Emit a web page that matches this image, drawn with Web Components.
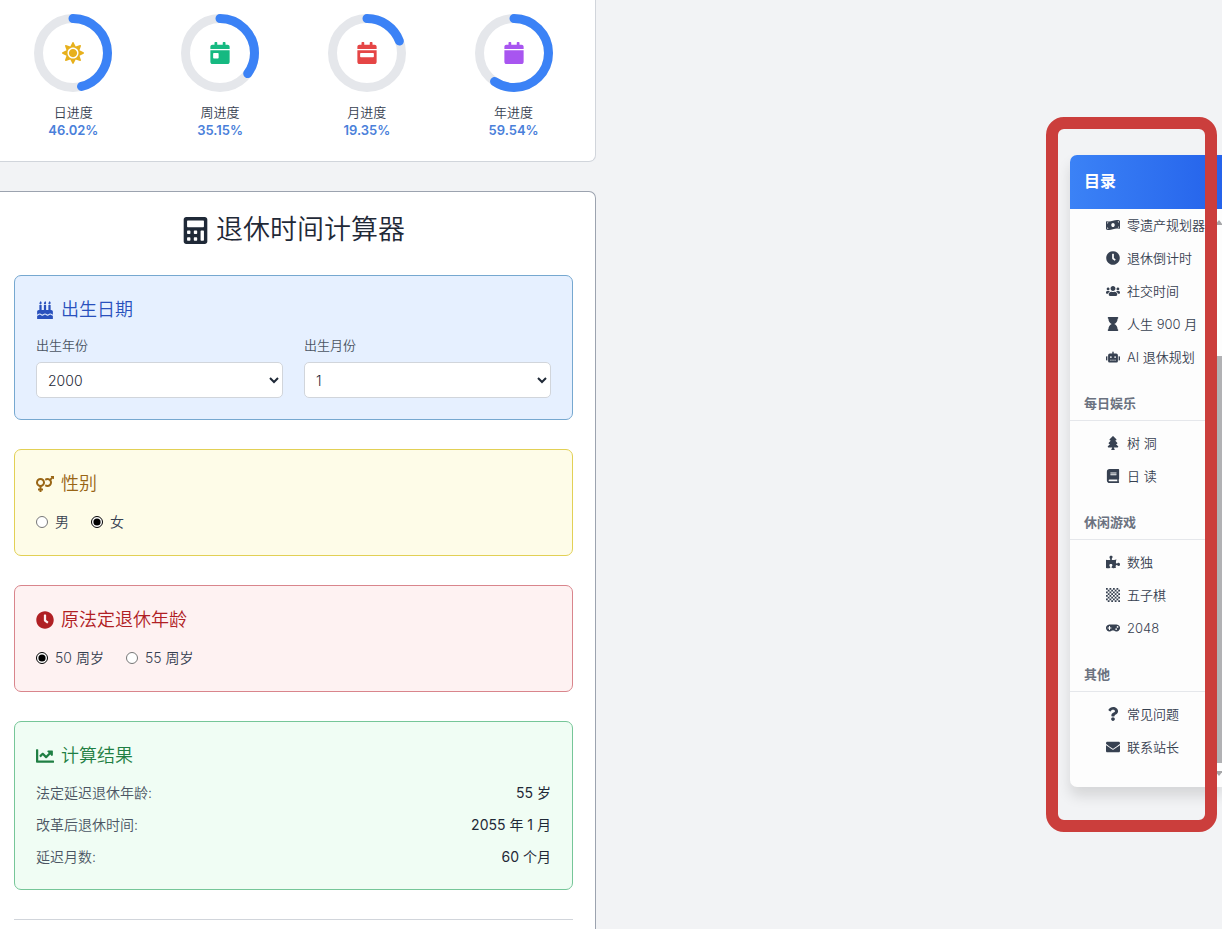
<!DOCTYPE html>
<html lang="zh-CN">
<head>
<meta charset="utf-8">
<meta name="viewport" content="width=device-width, initial-scale=1">
<title>退休时间计算器</title>
<style>
body {
  margin: 0;
  background: #f2f3f5;
  color: #374151;
  font: 350 14px/22px Inter, "Noto Sans CJK SC", sans-serif;
}
</style>
</head>
<body>
<page-layout>
  <panel-card class="progress">
    <progress-ring label="日进度" value="46.02" icon="sun" color="#e7b01c"></progress-ring>
    <progress-ring label="周进度" value="35.15" icon="calendar-day" color="#16b981"></progress-ring>
    <progress-ring label="月进度" value="19.35" icon="calendar-week" color="#e54545"></progress-ring>
    <progress-ring label="年进度" value="59.54" icon="calendar" color="#a855f0"></progress-ring>
  </panel-card>

  <retire-calculator></retire-calculator>

  <toc-panel slot="aside" heading="目录">
    <toc-section>
      <toc-link icon="money">零遗产规划器</toc-link>
      <toc-link icon="clock">退休倒计时</toc-link>
      <toc-link icon="users">社交时间</toc-link>
      <toc-link icon="hourglass">人生 900 月</toc-link>
      <toc-link icon="robot">AI 退休规划</toc-link>
    </toc-section>
    <toc-section heading="每日娱乐">
      <toc-link icon="tree">树 洞</toc-link>
      <toc-link icon="book">日 读</toc-link>
    </toc-section>
    <toc-section heading="休闲游戏">
      <toc-link icon="puzzle">数独</toc-link>
      <toc-link icon="chess-board">五子棋</toc-link>
      <toc-link icon="gamepad">2048</toc-link>
    </toc-section>
    <toc-section heading="其他">
      <toc-link icon="question">常见问题</toc-link>
      <toc-link icon="envelope">联系站长</toc-link>
    </toc-section>
  </toc-panel>
</page-layout>

<script>
(() => {
  'use strict';

  const calendarTop = 'M400 64h-48V16c0-8.8-7.2-16-16-16h-32c-8.8 0-16 7.2-16 16v48H160V16c0-8.8-7.2-16-16-16h-32c-8.8 0-16 7.2-16 16v48H48C21.5 64 0 85.5 0 112v48h448v-48c0-26.5-21.5-48-48-48z';
  const calendarBody = 'M0 464c0 26.5 21.5 48 48 48h352c26.5 0 48-21.5 48-48V192H0v272z';

  // 8x8 board, every other square filled
  let board = '';
  for (let y = 0; y < 8; y++) {
    for (let x = y % 2; x < 8; x += 2) {
      board += `M${x * 64} ${y * 64}h64v64h-64z`;
    }
  }

  // name: [viewBox width, path], all are 512 high
  const ICONS = {
    'sun': [512, 'M256 160c-52.9 0-96 43.1-96 96s43.1 96 96 96 96-43.1 96-96-43.1-96-96-96zm246.4 80.5l-94.7-47.3 33.5-100.4c4.5-13.6-8.4-26.5-21.9-21.9l-100.4 33.5-47.4-94.8c-6.4-12.8-24.6-12.8-31 0l-47.3 94.7L92.7 70.8c-13.6-4.5-26.5 8.4-21.9 21.9l33.5 100.4-94.7 47.4c-12.8 6.4-12.8 24.6 0 31l94.7 47.3-33.5 100.5c-4.5 13.6 8.4 26.5 21.9 21.9l100.4-33.5 47.3 94.7c6.4 12.8 24.6 12.8 31 0l47.3-94.7 100.4 33.5c13.6 4.5 26.5-8.4 21.9-21.9l-33.5-100.4 94.7-47.3c13-6.5 13-24.7.2-31.1zm-155.9 106c-49.9 49.9-131.1 49.9-181 0-49.9-49.9-49.9-131.1 0-181 49.9-49.9 131.1-49.9 181 0 49.9 49.9 49.9 131.1 0 181z'],
    'calendar': [448, calendarBody + calendarTop],
    'calendar-day': [448, calendarBody + 'm64-192c0-8.8 7.2-16 16-16h96c8.8 0 16 7.2 16 16v96c0 8.8-7.2 16-16 16H80c-8.8 0-16-7.2-16-16v-96z' + calendarTop],
    'calendar-week': [448, calendarBody + 'm64-192c0-8.8 7.2-16 16-16h288c8.8 0 16 7.2 16 16v64c0 8.8-7.2 16-16 16H80c-8.8 0-16-7.2-16-16v-64z' + calendarTop],
    'calculator': [448, 'M400 0H48C22.4 0 0 22.4 0 48v416c0 25.6 22.4 48 48 48h352c25.6 0 48-22.4 48-48V48c0-25.6-22.4-48-48-48zM128 435.2c0 6.4-6.4 12.8-12.8 12.8H76.8c-6.4 0-12.8-6.4-12.8-12.8v-38.4c0-6.4 6.4-12.8 12.8-12.8h38.4c6.4 0 12.8 6.4 12.8 12.8v38.4zm0-128c0 6.4-6.4 12.8-12.8 12.8H76.8c-6.4 0-12.8-6.4-12.8-12.8v-38.4c0-6.4 6.4-12.8 12.8-12.8h38.4c6.4 0 12.8 6.4 12.8 12.8v38.4zm128 128c0 6.4-6.4 12.8-12.8 12.8h-38.4c-6.4 0-12.8-6.4-12.8-12.8v-38.4c0-6.4 6.4-12.8 12.8-12.8h38.4c6.4 0 12.8 6.4 12.8 12.8v38.4zm0-128c0 6.4-6.4 12.8-12.8 12.8h-38.4c-6.4 0-12.8-6.4-12.8-12.8v-38.4c0-6.4 6.4-12.8 12.8-12.8h38.4c6.4 0 12.8 6.4 12.8 12.8v38.4zm128 128c0 6.4-6.4 12.8-12.8 12.8h-38.4c-6.4 0-12.8-6.4-12.8-12.8V268.8c0-6.4 6.4-12.8 12.8-12.8h38.4c6.4 0 12.8 6.4 12.8 12.8v166.4zm0-256c0 6.4-6.4 12.8-12.8 12.8H76.8c-6.4 0-12.8-6.4-12.8-12.8V76.8C64 70.4 70.4 64 76.8 64h294.4c6.4 0 12.8 6.4 12.8 12.8v102.4z'],
    'cake': [448, 'M448 384c-28.02 0-31.26-32-74.5-32-43.43 0-46.825 32-74.75 32-27.695 0-31.454-32-74.75-32-42.842 0-47.218 32-74.5 32-28.148 0-31.202-32-74.75-32-43.547 0-46.653 32-74.75 32v-80c0-26.5 21.5-48 48-48h16V112h64v144h64V112h64v144h64V112h64v144h16c26.5 0 48 21.5 48 48v80zm0 128H0v-96c43.356 0 46.767-32 74.75-32 27.951 0 31.253 32 74.75 32 42.843 0 47.217-32 74.5-32 28.148 0 31.201 32 74.75 32 43.357 0 46.767-32 74.75-32 27.488 0 31.252 32 74.5 32v96zM96 96c-17.75 0-32-14.25-32-32 0-31 32-23 32-64 12 0 32 29.5 32 56s-14.25 40-32 40zm128 0c-17.75 0-32-14.25-32-32 0-31 32-23 32-64 12 0 32 29.5 32 56s-14.25 40-32 40zm128 0c-17.75 0-32-14.25-32-32 0-31 32-23 32-64 12 0 32 29.5 32 56s-14.25 40-32 40z'],
    'venus-mars': [576, 'M564 0h-79c-10.7 0-16 12.9-8.5 20.5l16.9 16.9-48.7 48.7C422.5 72.1 396.2 64 368 64c-33.7 0-64.6 11.6-89.2 30.9 14 16.7 25 36 32.1 57.1 14.5-14.8 34.7-24 57.1-24 44.1 0 80 35.9 80 80s-35.9 80-80 80c-22.3 0-42.6-9.2-57.1-24-7.1 21.1-18 40.4-32.1 57.1 24.5 19.4 55.5 30.9 89.2 30.9 79.5 0 144-64.5 144-144 0-28.2-8.1-54.5-22.1-76.7l48.7-48.7 16.9 16.9c2.4 2.4 5.4 3.5 8.4 3.5 6.2 0 12.1-4.8 12.1-12V12c0-6.6-5.4-12-12-12zM144 64C64.5 64 0 128.5 0 208c0 68.5 47.9 125.9 112 140.4V400H76c-6.6 0-12 5.4-12 12v40c0 6.6 5.4 12 12 12h36v36c0 6.6 5.4 12 12 12h40c6.6 0 12-5.4 12-12v-36h36c6.6 0 12-5.4 12-12v-40c0-6.6-5.4-12-12-12h-36v-51.6c64.1-14.6 112-71.9 112-140.4 0-79.5-64.5-144-144-144zm0 224c-44.1 0-80-35.9-80-80s35.9-80 80-80 80 35.9 80 80-35.9 80-80 80z'],
    'clock': [512, 'M256 8C119 8 8 119 8 256s111 248 248 248 248-111 248-248S393 8 256 8zm92.5 313l-20 25a16 16 0 0 1-22.5 2.5l-67-49.7a40 40 0 0 1-15-31.3V112a16 16 0 0 1 16-16h32a16 16 0 0 1 16 16v144l58 42.5a16 16 0 0 1 2.5 22.5z'],
    'chart': [512, 'M496 384H64V80c0-8.84-7.16-16-16-16H16C7.16 64 0 71.16 0 80v336c0 17.67 14.33 32 32 32h464c8.84 0 16-7.16 16-16v-32c0-8.84-7.16-16-16-16zM464 96H345.94c-21.38 0-32.09 25.85-16.97 40.97l32.4 32.4L288 242.75l-73.37-73.37c-12.5-12.5-32.76-12.5-45.25 0l-68.69 68.69c-6.25 6.25-6.25 16.38 0 22.63l22.62 22.62c6.25 6.25 16.38 6.25 22.63 0L192 237.25l73.37 73.37c12.5 12.5 32.76 12.5 45.25 0l96-96 32.4 32.4c15.12 15.12 40.97 4.41 40.97-16.97V112c.01-8.84-7.15-16-15.99-16z'],
    'money': [640, 'M621.16 54.46C582.37 38.19 543.55 32 504.75 32c-123.17-.01-246.33 62.34-369.5 62.34-30.89 0-61.76-3.92-92.65-13.72-3.47-1.1-6.95-1.62-10.35-1.62C15.04 79 0 92.32 0 110.81v317.26c0 12.63 7.23 24.6 18.84 29.46C57.63 473.81 96.45 480 135.25 480c123.17 0 246.34-62.35 369.51-62.35 30.89 0 61.76 3.92 92.65 13.72 3.47 1.1 6.95 1.62 10.35 1.62 17.21 0 32.25-13.32 32.25-31.81V83.93c-.01-12.64-7.24-24.6-18.85-29.47zM48 132.22c20.12 5.04 41.12 7.57 62.72 8.93C104.84 170.54 79 192.69 48 192.69v-60.47zm0 285v-47.78c34.37 0 62.18 27.27 63.71 61.4-22.53-1.81-43.59-6.31-63.71-13.62zM320 352c-44.19 0-80-42.99-80-96 0-53.02 35.82-96 80-96s80 42.98 80 96c0 53.03-35.83 96-80 96zm272 27.78c-17.52-4.39-35.71-6.85-54.32-8.44 5.87-26.08 27.5-45.88 54.32-49.28v57.72zm0-236.11c-30.89-3.91-54.86-29.7-55.81-61.55 19.54 2.17 38.09 6.23 55.81 12.66v48.89z'],
    'users': [640, 'M96 224c35.3 0 64-28.7 64-64s-28.7-64-64-64-64 28.7-64 64 28.7 64 64 64zm448 0c35.3 0 64-28.7 64-64s-28.7-64-64-64-64 28.7-64 64 28.7 64 64 64zm32 32h-64c-17.6 0-33.5 7.1-45.1 18.6 40.3 22.1 68.9 62 75.1 109.4h66c17.7 0 32-14.3 32-32v-32c0-35.3-28.7-64-64-64zm-256 0c61.9 0 112-50.1 112-112S381.9 32 320 32 208 82.1 208 144s50.1 112 112 112zm76.8 32h-8.3c-20.8 10-43.9 16-68.5 16s-47.6-6-68.5-16h-8.3C179.6 288 128 339.6 128 403.2V432c0 26.5 21.5 48 48 48h288c26.5 0 48-21.5 48-48v-28.8c0-63.6-51.6-115.2-115.2-115.2zm-223.7-13.4C161.5 263.1 145.6 256 128 256H64c-35.3 0-64 28.7-64 64v32c0 17.7 14.3 32 32 32h65.9c6.3-47.4 34.9-87.3 75.2-109.4z'],
    'hourglass': [384, 'M360 64c13.255 0 24-10.745 24-24V24c0-13.255-10.745-24-24-24H24C10.745 0 0 10.745 0 24v16c0 13.255 10.745 24 24 24 0 90.965 51.016 167.734 120.842 192C75.016 280.266 24 357.035 24 448c-13.255 0-24 10.745-24 24v16c0 13.255 10.745 24 24 24h336c13.255 0 24-10.745 24-24v-16c0-13.255-10.745-24-24-24 0-90.965-51.016-167.734-120.842-192C308.984 231.734 360 154.965 360 64z'],
    'robot': [640, 'M32 224h32v192H32a32 32 0 0 1-32-32V256a32 32 0 0 1 32-32zm512-48v272a64 64 0 0 1-64 64H160a64 64 0 0 1-64-64V176a80 80 0 0 1 80-80h112V32a32 32 0 0 1 64 0v64h112a80 80 0 0 1 80 80zm-280 80a40 40 0 1 0-40 40 40 40 0 0 0 40-40zm-8 128h-64v32h64zm96 0h-64v32h64zm104-128a40 40 0 1 0-40 40 40 40 0 0 0 40-40zm-8 128h-64v32h64zm192-128v128a32 32 0 0 1-32 32h-32V224h32a32 32 0 0 1 32 32z'],
    'tree': [384, 'M378.31 378.49L298.42 288h30.63c9.01 0 16.98-5 20.78-13.06 3.8-8.04 2.55-17.26-3.28-24.05L268.42 160h28.89c9.1 0 17.3-5.35 20.86-13.61 3.52-8.13 1.86-17.59-4.24-24.08L203.66 4.83c-6.03-6.45-17.28-6.45-23.32 0L70.06 122.31c-6.1 6.49-7.75 15.95-4.24 24.08C69.38 154.65 77.59 160 86.69 160h28.89l-78.14 90.91c-5.81 6.78-7.06 15.99-3.27 24.04C37.97 283 45.93 288 54.95 288h30.63L5.69 378.49c-6 6.79-7.36 16.09-3.56 24.26 3.75 8.05 12 13.25 21.01 13.25H160v24.45l-30.29 48.4c-5.32 10.64 2.42 23.16 14.31 23.16h95.96c11.89 0 19.63-12.52 14.31-23.16L224 440.45V416h136.86c9.01 0 17.26-5.2 21.01-13.25 3.8-8.17 2.44-17.47-3.56-24.26z'],
    'book': [448, 'M448 360V24c0-13.3-10.7-24-24-24H96C43 0 0 43 0 96v320c0 53 43 96 96 96h328c13.3 0 24-10.7 24-24v-16c0-7.5-3.5-14.3-8.9-18.7-4.2-15.4-4.2-59.3 0-74.7 5.4-4.3 8.9-11.1 8.9-18.6zM128 134c0-3.3 2.7-6 6-6h212c3.3 0 6 2.7 6 6v20c0 3.3-2.7 6-6 6H134c-3.3 0-6-2.7-6-6v-20zm0 64c0-3.3 2.7-6 6-6h212c3.3 0 6 2.7 6 6v20c0 3.3-2.7 6-6 6H134c-3.3 0-6-2.7-6-6v-20zm253.4 250H96c-17.7 0-32-14.3-32-32 0-17.6 14.4-32 32-32h285.4c-1.9 17.1-1.9 46.9 0 64z'],
    'puzzle': [576, 'M519.442 288.651c-41.519 0-59.5 31.593-82.058 31.593C377.409 320.244 432 144 432 144s-196.288 80-196.288-3.297c0-35.827 36.288-46.25 36.288-85.985C272 19.216 243.885 0 210.539 0c-34.654 0-66.366 18.891-66.366 56.346 0 41.364 31.711 59.277 31.711 81.75C175.885 207.719 0 166.758 0 166.758v333.237s178.635 41.047 178.635-28.662c0-22.473-40-40.107-40-81.471 0-37.456 29.25-56.346 63.577-56.346 33.673 0 61.788 19.216 61.788 54.717 0 39.735-36.288 50.158-36.288 85.985 0 60.803 129.675 25.73 181.23 25.73 0 0-34.725-120.101 25.827-120.101 35.962 0 46.423 36.152 86.308 36.152C556.712 416 576 387.99 576 354.443c0-34.199-18.962-65.792-56.558-65.792z'],
    'chess-board': [512, board],
    'gamepad': [640, 'M480.07 96H160a160 160 0 1 0 114.24 272h91.5A160 160 0 1 0 480.07 96zM248 268a12 12 0 0 1-12 12h-52v52a12 12 0 0 1-12 12h-24a12 12 0 0 1-12-12v-52H84a12 12 0 0 1-12-12v-24a12 12 0 0 1 12-12h52v-52a12 12 0 0 1 12-12h24a12 12 0 0 1 12 12v52h52a12 12 0 0 1 12 12zm216 76a40 40 0 1 1 40-40 40 40 0 0 1-40 40zm64-96a40 40 0 1 1 40-40 40 40 0 0 1-40 40z'],
    'question': [384, 'M202.021 0C122.202 0 70.503 32.703 29.914 91.026c-7.363 10.58-5.093 25.086 5.178 32.874l43.138 32.709c10.373 7.865 25.132 6.026 33.253-4.148 25.049-31.381 43.63-49.449 82.757-49.449 30.764 0 68.816 19.799 68.816 49.631 0 22.552-18.617 34.134-48.993 51.164-35.423 19.86-82.299 44.576-82.299 106.405V320c0 13.255 10.745 24 24 24h72.471c13.255 0 24-10.745 24-24v-5.773c0-42.86 125.268-44.645 125.268-160.627C377.504 66.256 286.902 0 202.021 0zM192 373.459c-38.196 0-69.271 31.075-69.271 69.271 0 38.195 31.075 69.27 69.271 69.27s69.271-31.075 69.271-69.271-31.075-69.27-69.271-69.27z'],
    'envelope': [512, 'M502.3 190.8c3.9-3.1 9.7-.2 9.7 4.7V400c0 26.5-21.5 48-48 48H48c-26.5 0-48-21.5-48-48V195.6c0-5 5.7-7.8 9.7-4.7 22.4 17.4 52.1 39.5 154.1 113.6 21.1 15.4 56.7 47.8 92.2 47.6 35.7.3 72-32.8 92.3-47.6 102-74.1 131.6-96.3 154-113.7zM256 320c23.2.4 56.6-29.2 73.4-41.4 132.7-96.3 142.8-104.7 173.4-128.7 5.8-4.5 9.2-11.5 9.2-18.9v-19c0-26.5-21.5-48-48-48H48c-26.5 0-48 21.5-48 48v19c0 7.4 3.4 14.3 9.2 18.9 30.6 23.9 40.7 32.4 173.4 128.7 16.8 12.2 50.2 41.8 73.4 41.4z'],
  };

  class BaseElement extends HTMLElement {
    connectedCallback() {
      if (this.shadowRoot) return;
      this.attachShadow({ mode: 'open' }).innerHTML =
        '<style>*, *::before, *::after { box-sizing: border-box; }</style>' + this.render();
    }

    attr(name) { return this.getAttribute(name) || ''; }
  }

  class FaIcon extends BaseElement {
    render() {
      const [width, path] = ICONS[this.attr('name')];
      return `
<style>
:host {
  display: inline-flex;
  flex: none;
  width: 1em;
  height: 1em;
}
svg {
  width: 100%;
  height: 100%;
  fill: currentColor;
  fill-rule: evenodd;
}
</style>
<svg viewBox="0 0 ${width} 512" aria-hidden="true"><path d="${path}"/></svg>`;
    }
  }

  class PageLayout extends BaseElement {
    render() {
      return `
<style>
:host {
  display: flex;
  justify-content: space-between;
  min-height: 100vh;
}
main {
  display: flex;
  flex-direction: column;
  gap: 29px;
  width: calc(50% - 15px);
}
aside {
  flex: none;
  margin-top: 155px;
}
</style>
<main><slot></slot></main>
<aside><slot name="aside"></slot></aside>`;
    }
  }

  class PanelCard extends BaseElement {
    render() {
      return `
<style>
:host {
  display: block;
  background: #fff;
  border: 1px solid #d1d5db;
  border-width: 0 1px 1px 0;
  border-radius: 0 0 7px 0;
}
div {
  display: grid;
  grid-template-columns: repeat(4, 1fr);
  padding: 14px 8px 22px 0;
}
</style>
<div><slot></slot></div>`;
    }
  }

  class ProgressRing extends BaseElement {
    render() {
      const value = this.attr('value');
      return `
<style>
:host {
  display: flex;
  flex-direction: column;
  align-items: center;
  font-size: 13px;
  line-height: 18px;
}
.ring {
  display: grid;
  place-items: center;
  margin-bottom: 11px;
}
.ring > * {
  grid-area: 1 / 1;
}
svg {
  width: 78px;
  height: 78px;
  fill: none;
  stroke-width: 9;
}
.track {
  stroke: #e5e7eb;
}
.bar {
  stroke: #3b82f6;
  stroke-linecap: round;
}
fa-icon {
  font-size: 22px;
}
b {
  color: #4a80da;
  font-weight: 600;
}
</style>
<div class="ring">
  <svg viewBox="0 0 78 78" role="img" aria-label="${this.attr('label')}">
    <circle class="track" cx="39" cy="39" r="34.5"/>
    <circle class="bar" cx="39" cy="39" r="34.5" pathLength="100" stroke-dasharray="${value} 100" transform="rotate(-90 39 39)"/>
  </svg>
  <fa-icon name="${this.attr('icon')}" style="color: ${this.attr('color')}"></fa-icon>
</div>
<span>${this.attr('label')}</span>
<b>${value}%</b>`;
    }
  }

  class SectionCard extends BaseElement {
    render() {
      return `
<style>
:host {
  display: block;
  padding: 21px;
  border: 1px solid var(--edge);
  border-radius: 7px;
  background: var(--fill);
}
:host([tone="blue"]) { --edge: #76a8d0; --fill: #e6f0ff; --ink: #2950bd; }
:host([tone="yellow"]) { --edge: #e2d055; --fill: #fefce8; --ink: #996515; }
:host([tone="red"]) { --edge: #d9858c; --fill: #fef2f2; --ink: #b02024; }
:host([tone="green"]) { --edge: #76c698; --fill: #f0fdf4; --ink: #1f7f43; }
h3 {
  display: flex;
  align-items: center;
  gap: 7px;
  margin: 0 0 14px;
  color: var(--ink);
  font-size: 18px;
  font-weight: inherit;
  line-height: 25px;
}
</style>
<h3><fa-icon name="${this.attr('icon')}"></fa-icon>${this.attr('heading')}</h3>
<slot></slot>`;
    }
  }

  class SelectField extends BaseElement {
    render() {
      const from = +this.attr('from');
      const to = +this.attr('to');
      let options = '';
      for (let n = from; n <= to; n++) {
        options += `<option${String(n) === this.attr('value') ? ' selected' : ''}>${n}</option>`;
      }
      return `
<style>
:host {
  display: block;
}
label {
  display: block;
  margin-bottom: 8px;
  color: #4b5563;
  font-size: 13px;
  line-height: 18px;
}
select {
  display: block;
  width: 100%;
  height: 36px;
  padding: 0 7px;
  border: 1px solid #d1d5db;
  border-radius: 5px;
  background: #fff;
  color: #1f2937;
  font: inherit;
}
</style>
<label for="field">${this.attr('label')}</label>
<select id="field">${options}</select>`;
    }
  }

  class RadioGroup extends BaseElement {
    render() {
      const name = this.attr('name');
      const radios = this.attr('options').split(',').map(text => `
<label><input type="radio" name="${name}" value="${text}"${text === this.attr('value') ? ' checked' : ''}>${text}</label>`);
      return `
<style>
:host {
  display: flex;
  gap: 22px;
  line-height: 24px;
}
label {
  display: flex;
  align-items: center;
  gap: 7px;
}
input {
  width: 12px;
  height: 12px;
  margin: 0;
  accent-color: #000;
}
</style>${radios.join('')}`;
    }
  }

  class ResultRow extends BaseElement {
    render() {
      return `
<style>
:host {
  display: flex;
  justify-content: space-between;
}
span {
  color: #4b5563;
}
output {
  color: #1f2937;
  font-weight: 400;
}
</style>
<span>${this.attr('label')}</span>
<output><slot></slot></output>`;
    }
  }

  class RetireCalculator extends BaseElement {
    render() {
      return `
<style>
:host {
  display: flex;
  flex: 1;
  flex-direction: column;
  gap: 29px;
  padding: 20px 22px 8px 14px;
  border: 1px solid #9ca3af;
  border-width: 1px 1px 0 0;
  border-radius: 0 7px 0 0;
  background: #fff;
}
h2 {
  display: flex;
  justify-content: center;
  align-items: center;
  gap: 7px;
  margin: 0 0 -2px;
  color: #1f2937;
  font-size: 27px;
  font-weight: inherit;
  line-height: 36px;
}
.fields {
  display: grid;
  grid-template-columns: 1fr 1fr;
  gap: 21px;
}
.rows {
  display: grid;
  gap: 10px;
}
hr {
  width: 100%;
  height: 1px;
  margin: 0;
  border: 0;
  background: #d1d5db;
}
</style>
<h2><fa-icon name="calculator"></fa-icon>退休时间计算器</h2>
<section-card tone="blue" icon="cake" heading="出生日期">
  <div class="fields">
    <select-field label="出生年份" from="1960" to="2010" value="2000"></select-field>
    <select-field label="出生月份" from="1" to="12" value="1"></select-field>
  </div>
</section-card>
<section-card tone="yellow" icon="venus-mars" heading="性别">
  <radio-group name="gender" options="男,女" value="女"></radio-group>
</section-card>
<section-card tone="red" icon="clock" heading="原法定退休年龄">
  <radio-group name="age" options="50 周岁,55 周岁" value="50 周岁"></radio-group>
</section-card>
<section-card tone="green" icon="chart" heading="计算结果">
  <div class="rows">
    <result-row label="法定延迟退休年龄:">55 岁</result-row>
    <result-row label="改革后退休时间:">2055 年 1 月</result-row>
    <result-row label="延迟月数:">60 个月</result-row>
  </div>
</section-card>
<hr>`;
    }
  }

  class TocPanel extends BaseElement {
    render() {
      return `
<style>
:host {
  display: block;
  position: relative;
  width: 152px;
}
nav {
  border-radius: 7px 0 0 7px;
  background: #fdfdfd;
  box-shadow: 0 9px 14px rgba(0, 0, 0, 0.12);
}
h2 {
  margin: 0;
  padding: 15px 14px 17px;
  border-radius: 7px 0 0 0;
  background: linear-gradient(90deg, #3b82f6, #2563eb);
  color: #fff;
  font-size: 16px;
  font-weight: 700;
  line-height: 22px;
}
.body {
  display: flex;
}
.list {
  flex: 1;
  min-width: 0;
  padding: 5px 0 29px;
}
.bar {
  display: flex;
  flex-direction: column;
  align-items: center;
  width: 6px;
  padding: 11px 0;
}
.bar::before, .bar::after {
  content: "";
  border: 4px solid transparent;
}
.bar::before {
  border-top: 0;
  border-bottom: 5px solid #a6a6a8;
}
.bar::after {
  border-bottom: 0;
  border-top: 5px solid #a6a6a8;
}
.thumb {
  flex: 1;
  width: 100%;
  margin: 131px 0 8px;
  background: #b1b1b4;
}
/* red marker drawn over the panel */
.marker {
  position: absolute;
  inset: -38px 5px -45px -24px;
  height: 715px;
  border: 12px solid #cb3e3c;
  border-radius: 18px;
  pointer-events: none;
}
</style>
<nav>
  <h2>${this.attr('heading')}</h2>
  <div class="body">
    <div class="list"><slot></slot></div>
    <div class="bar"><div class="thumb"></div></div>
  </div>
</nav>
<div class="marker"></div>`;
    }
  }

  class TocSection extends BaseElement {
    render() {
      const heading = this.attr('heading');
      return `
<style>
:host {
  display: block;
}
:host([heading]) {
  margin-top: 26px;
}
h3 {
  margin: 0 0 11px;
  padding: 0 14px 8px;
  border-bottom: 1px solid #e5e7eb;
  color: #6b7280;
  font-size: 13px;
  font-weight: 600;
  line-height: 18px;
}
.links {
  display: grid;
  gap: 11px;
  padding-left: 36px;
}
</style>
${heading ? `<h3>${heading}</h3>` : ''}
<div class="links"><slot></slot></div>`;
    }
  }

  class TocLink extends BaseElement {
    render() {
      return `
<style>
:host {
  display: block;
}
a {
  display: flex;
  align-items: center;
  gap: 7px;
  color: #374151;
  font-size: 13px;
  line-height: 22px;
  text-decoration: none;
  white-space: nowrap;
}
fa-icon {
  font-size: 14px;
}
</style>
<a href="#"><fa-icon name="${this.attr('icon')}"></fa-icon><span><slot></slot></span></a>`;
    }
  }

  customElements.define('fa-icon', FaIcon);
  customElements.define('page-layout', PageLayout);
  customElements.define('panel-card', PanelCard);
  customElements.define('progress-ring', ProgressRing);
  customElements.define('section-card', SectionCard);
  customElements.define('select-field', SelectField);
  customElements.define('radio-group', RadioGroup);
  customElements.define('result-row', ResultRow);
  customElements.define('retire-calculator', RetireCalculator);
  customElements.define('toc-panel', TocPanel);
  customElements.define('toc-section', TocSection);
  customElements.define('toc-link', TocLink);
})();
</script>
</body>
</html>
